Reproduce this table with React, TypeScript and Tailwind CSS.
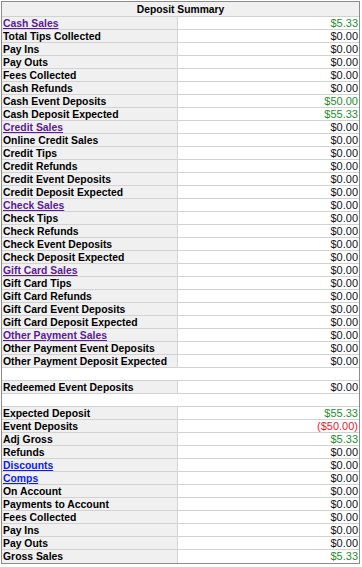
type Tone = 'plain' | 'green' | 'red'
type Link = 'visited' | 'new'

type Row =
  | { kind: 'gap' }
  | { kind: 'row'; label: string; value: string; tone?: Tone; link?: Link }

const row = (label: string, value = '$0.00', tone: Tone = 'plain', link?: Link): Row => ({
  kind: 'row',
  label,
  value,
  tone,
  link,
})

const rows: Row[] = [
  row('Cash Sales', '$5.33', 'green', 'visited'),
  row('Total Tips Collected'),
  row('Pay Ins'),
  row('Pay Outs'),
  row('Fees Collected'),
  row('Cash Refunds'),
  row('Cash Event Deposits', '$50.00', 'green'),
  row('Cash Deposit Expected', '$55.33', 'green'),
  row('Credit Sales', '$0.00', 'plain', 'visited'),
  row('Online Credit Sales'),
  row('Credit Tips'),
  row('Credit Refunds'),
  row('Credit Event Deposits'),
  row('Credit Deposit Expected'),
  row('Check Sales', '$0.00', 'plain', 'visited'),
  row('Check Tips'),
  row('Check Refunds'),
  row('Check Event Deposits'),
  row('Check Deposit Expected'),
  row('Gift Card Sales', '$0.00', 'plain', 'visited'),
  row('Gift Card Tips'),
  row('Gift Card Refunds'),
  row('Gift Card Event Deposits'),
  row('Gift Card Deposit Expected'),
  row('Other Payment Sales', '$0.00', 'plain', 'visited'),
  row('Other Payment Event Deposits'),
  row('Other Payment Deposit Expected'),
  { kind: 'gap' },
  row('Redeemed Event Deposits'),
  { kind: 'gap' },
  row('Expected Deposit', '$55.33', 'green'),
  row('Event Deposits', '($50.00)', 'red'),
  row('Adj Gross', '$5.33', 'green'),
  row('Refunds'),
  row('Discounts', '$0.00', 'plain', 'new'),
  row('Comps', '$0.00', 'plain', 'new'),
  row('On Account'),
  row('Payments to Account'),
  row('Fees Collected'),
  row('Pay Ins'),
  row('Pay Outs'),
  row('Gross Sales', '$5.33', 'green'),
]

const toneClass: Record<Tone, string> = {
  plain: 'text-[#10131a]',
  green: 'text-[#23902a]',
  red: 'text-[#f0162e]',
}

export default function App() {
  return (
    <div className="bg-white min-h-[567px] pt-[1px] pl-[1px] font-['Liberation_Sans',Arial,sans-serif]">
      <div className="w-[359px] border border-[#8c8c8c]">
        {/* title */}
        <div className="h-[15px] bg-[#f0f0f0] border-b border-[#d2d2d2] text-center text-[10.3px] leading-[15px] font-bold text-black">
          Deposit Summary
        </div>

        {rows.map((r, i) =>
          r.kind === 'gap' ? (
            <div key={i} className="h-[13px] bg-white border-b border-[#d2d2d2]" />
          ) : (
            <div
              key={i}
              className="grid grid-cols-[176px_1fr] h-[13px] border-b border-[#d2d2d2] last:border-b-0"
            >
              <div className="bg-[#f0f0f0] border-r border-[#d2d2d2] pl-[1px] pt-[1px] text-[10.4px] leading-[11px] font-bold whitespace-nowrap overflow-hidden">
                {r.link ? (
                  <a
                    href="#"
                    className={`underline ${r.link === 'visited' ? 'text-[#5a1a9a]' : 'text-[#0a1cf0]'}`}
                  >
                    {r.label}
                  </a>
                ) : (
                  <span className="text-black">{r.label}</span>
                )}
              </div>
              <div className={`bg-white text-right pr-[1px] pt-[1px] text-[11px] leading-[11px] overflow-hidden ${toneClass[r.tone ?? 'plain']}`}>
                {r.value}
              </div>
            </div>
          )
        )}
      </div>
    </div>
  )
}
